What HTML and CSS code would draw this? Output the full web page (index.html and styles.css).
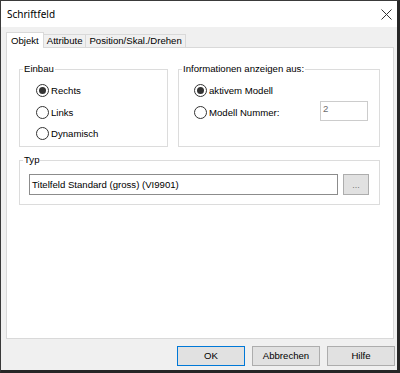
FILE: index.html
```html
<!DOCTYPE html>
<html lang="de">
<head>
<meta charset="utf-8">
<link rel="stylesheet" href="styles.css">
</head>
<body>
<div class="window">
  <div class="titlebar">
    <span class="title">Schriftfeld</span>
    <svg class="close" width="11" height="11" viewBox="0 0 11 11"><path d="M0.5 0.5 L10.5 10.5 M10.5 0.5 L0.5 10.5" stroke="#333" stroke-width="1" fill="none"/></svg>
  </div>
  <div class="body">
    <div class="tabs">
      <div class="tab active">Objekt</div>
      <div class="tab">Attribute</div>
      <div class="tab">Position/Skal./Drehen</div>
    </div>
    <div class="panel">
      <div class="row">
        <div class="group einbau">
          <div class="legend">Einbau</div>
          <div class="radios">
            <div class="opt"><span class="radio checked"></span><span>Rechts</span></div>
            <div class="opt"><span class="radio"></span><span>Links</span></div>
            <div class="opt"><span class="radio"></span><span>Dynamisch</span></div>
          </div>
        </div>
        <div class="group info">
          <div class="legend">Informationen anzeigen aus:</div>
          <div class="radios">
            <div class="opt"><span class="radio checked"></span><span>aktivem Modell</span></div>
            <div class="opt"><span class="radio"></span><span>Modell Nummer:</span><span class="numbox">2</span></div>
          </div>
        </div>
      </div>
      <div class="group typ">
        <div class="legend">Typ</div>
        <div class="typrow">
          <div class="textbox">Titelfeld Standard (gross) (VI9901)</div>
          <div class="browse">...</div>
        </div>
      </div>
    </div>
    <div class="buttons">
      <div class="btn default">OK</div>
      <div class="btn">Abbrechen</div>
      <div class="btn">Hilfe</div>
    </div>
  </div>
</div>
</body>
</html>
```

FILE: styles.css
```css
* { box-sizing: border-box; }
html, body { margin: 0; padding: 0; }
body {
  font-family: "Liberation Sans", Arial, sans-serif;
  font-size: 9.6px;
  color: #000;
  background: #fff;
}
.window {
  width: 400px;
  height: 373px;
  border-top: 1px solid #3a3a3a;
  border-left: 1px solid #3a3a3a;
  border-right: 3px solid #262626;
  border-bottom: 3px solid #262626;
  display: flex;
  flex-direction: column;
}
.titlebar {
  height: 26px;
  background: #fff;
  display: flex;
  align-items: center;
  padding-left: 6px;
  padding-right: 5px;
}
.title {
  font-family: "Noto Sans", "Open Sans", sans-serif;
  font-size: 10px;
  line-height: 26px;
  color: #000;
}
.close { margin-left: auto; display: block; }
.body {
  flex: 1;
  background: #f0f0f0;
  padding: 5px 3px 0 5px;
  display: flex;
  flex-direction: column;
}
.tabs {
  display: flex;
  align-items: flex-end;
  height: 16px;
  margin-bottom: -1px;
  position: relative;
  z-index: 1;
}
.tab {
  height: 13px;
  margin-bottom: 1px;
  border: 1px solid #d9d9d9;
  border-bottom: none;
  background: #f0f0f0;
  padding: 0 3px;
  line-height: 11px;
  margin-left: -1px;
  white-space: nowrap;
}
.tab.active {
  height: 16px;
  margin-bottom: 0;
  margin-left: 0;
  background: #fff;
  padding: 2px 4px 0 4px;
  position: relative;
  z-index: 2;
}
.panel {
  flex: 1;
  background: #fff;
  border: 1px solid #d9d9d9;
  padding: 21px 13px 0 12px;
}
.row {
  display: flex;
  gap: 10px;
}
.group {
  border: 1px solid #dcdcdc;
  background: #fff;
}
.legend {
  margin: -7px 0 0 3px;
  padding: 0 1px;
  line-height: 12px;
  background: #fff;
  width: fit-content;
  white-space: nowrap;
}
.einbau { width: 149px; height: 78px; }
.einbau .radios { padding-left: 16px; }
.info { width: 202px; height: 78px; }
.info .radios { padding-left: 15px; padding-right: 11px; }
.radios {
  padding-top: 5px;
  display: flex;
  flex-direction: column;
}
.opt {
  height: 21.5px;
  display: flex;
  align-items: center;
  gap: 2px;
  white-space: nowrap;
}
.radio {
  width: 13px;
  height: 13px;
  border: 1px solid #333;
  border-radius: 50%;
  background: #fff;
  display: flex;
  align-items: center;
  justify-content: center;
  flex: none;
}
.radio.checked::after {
  content: "";
  width: 7px;
  height: 7px;
  border-radius: 50%;
  background: #333;
}
.numbox {
  margin-left: auto;
  width: 48px;
  height: 20px;
  border: 1px solid #cccccc;
  background: #fff;
  color: #6d6d6d;
  padding: 1px 2px;
  line-height: 12px;
  align-self: center;
  margin-top: -2px;
}
.typ {
  margin-top: 13px;
  height: 45px;
}
.typrow {
  margin-top: 8px;
  padding: 0 10px 0 9px;
  display: flex;
  gap: 5px;
}
.textbox {
  width: 309px;
  height: 21px;
  border: 1px solid #8c8c8c;
  background: #fff;
  padding: 0 2px;
  line-height: 19px;
  white-space: nowrap;
}
.browse {
  width: 26px;
  height: 21px;
  border: 1px solid #adadad;
  background: #e1e1e1;
  color: #777;
  text-align: center;
  line-height: 21px;
  font-size: 9px;
}
.buttons {
  display: flex;
  justify-content: flex-end;
  gap: 7px;
  margin: 7px -1px 4px 0;
}
.btn {
  width: 68px;
  height: 20px;
  border: 1px solid #adadad;
  background: #e1e1e1;
  text-align: center;
  line-height: 18px;
}
.btn.default { border-color: #0078d7; }
```
